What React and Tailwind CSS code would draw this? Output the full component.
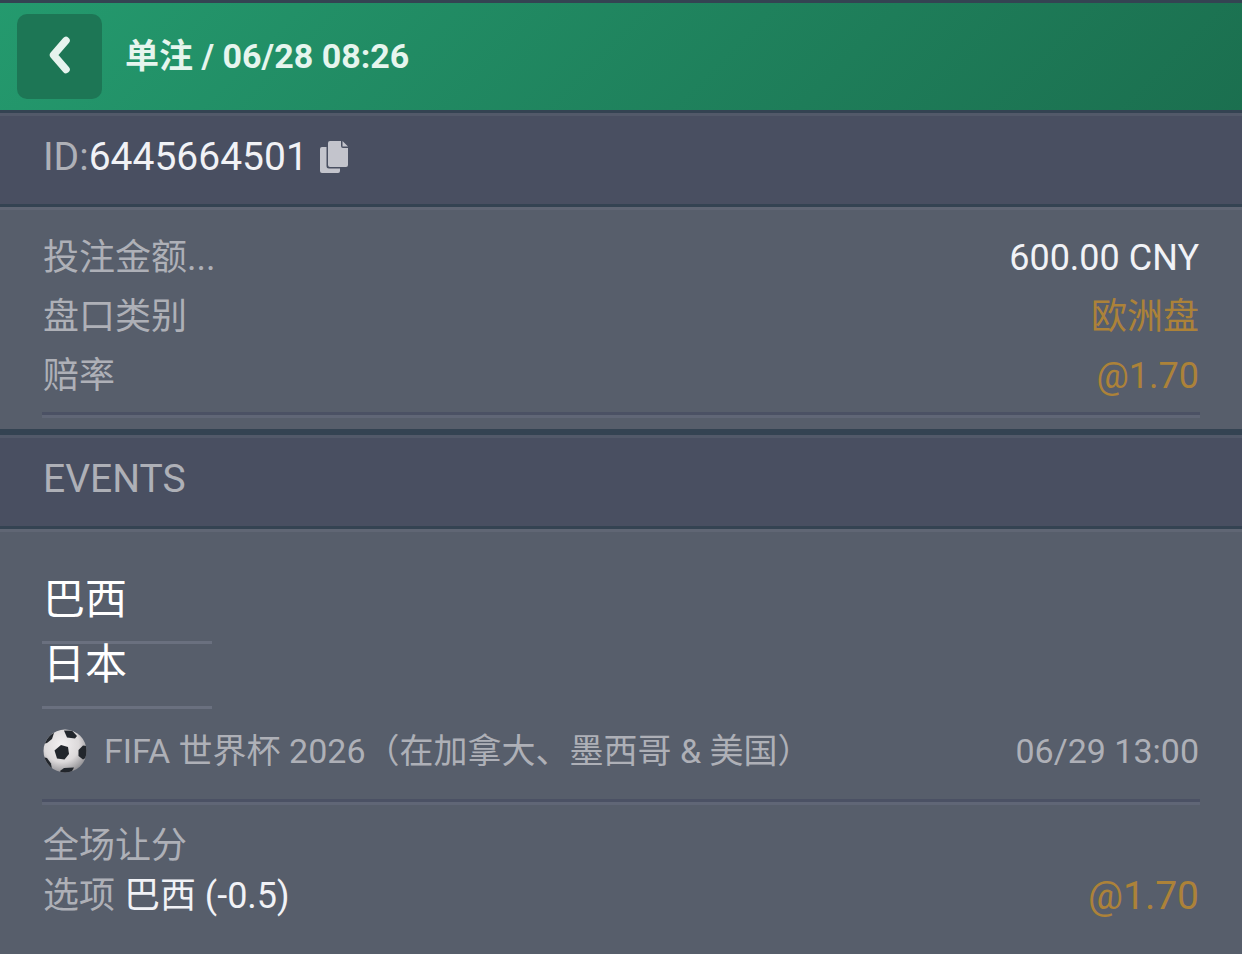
import React, { useState } from 'react';

const bet = {
  type: '单注',
  placedAt: '06/28 08:26',
  id: '6445664501',
  details: [
    { label: '投注金额...', value: '600.00 CNY', highlight: false },
    { label: '盘口类别', value: '欧洲盘', highlight: true },
    { label: '赔率', value: '@1.70', highlight: true },
  ],
  teams: ['巴西', '日本'],
  league: 'FIFA 世界杯 2026（在加拿大、墨西哥 & 美国）',
  startsAt: '06/29 13:00',
  market: '全场让分',
  selection: '巴西 (-0.5)',
  odds: '@1.70',
};

const ChevronIcon = () => (
  <svg viewBox="0 0 24 38" className="w-[24px] h-[38px]" fill="none" aria-hidden="true">
    <path d="M18 4.500 L5.500 19 L18 33.500" stroke="#e6f3ee" strokeWidth="7.5" strokeLinecap="round" strokeLinejoin="round" />
  </svg>
);

const CopyIcon = () => (
  <svg viewBox="0 0 28 32" className="w-7 h-8" fill="#c3c4cc" aria-hidden="true">
    <path d="M2 6 H6.500 V25 Q6.500 27.500 9 27.500 H20 V30 Q20 32 18 32 H2 Q0 32 0 30 V8 Q0 6 2 6 Z" />
    <path d="M10 0 H21 V5 Q21 7 23 7 H28 V24 Q28 26 26 26 H10 Q8 26 8 24 V2 Q8 0 10 0 Z" />
    <path d="M22.500 0 L28 5.500 H22.500 Z" />
  </svg>
);

const BallIcon = () => (
  <svg viewBox="0 0 44 44" className="w-11 h-11 shrink-0" aria-hidden="true">
    <defs>
      <radialGradient id="ballShade" cx="0.42" cy="0.35" r="0.68">
        <stop offset="0" stopColor="#f2f0f1" />
        <stop offset="0.6" stopColor="#dcd9da" />
        <stop offset="1" stopColor="#8f8e92" />
      </radialGradient>
      <clipPath id="ballClip">
        <circle cx="22" cy="22" r="21.500" />
      </clipPath>
    </defs>
    <circle cx="22" cy="22" r="21.500" fill="url(#ballShade)" />
    <g clipPath="url(#ballClip)" fill="#22262c">
      <path d="M11.500 21.500 L18 16 L25 18 L26 25 L21.500 30.500 L14 29.500 Z" />
      <path d="M21 1.500 L29 1.500 L34 7 L32 9.500 L24 8.500 Z" />
      <path d="M40 16.500 L35.500 21 L35.500 27 L40 30.500 L44 28 L44 17 Z" />
      <path d="M17 42 L21 39 L31 38.500 L28 44 L18 44 Z" />
      <path d="M0 15 L4 14 L9 10 L11 4 L3 6 Z" />
      <path d="M0 28 L4 29 L8 34.500 L9 40 L3 38 Z" />
    </g>
  </svg>
);

const SectionBar = ({ children }) => (
  <div className="flex items-center h-[94px] px-[43px] pb-2 text-[39px] bg-[#494f61] border-t-[3px] border-t-[#525969] shadow-[inset_0_-3px_0_#344352]">
    {children}
  </div>
);

const Divider = () => <div className="h-[6px] bg-[#606676] border-t-[3px] border-[#4b5164]" />;

const App = () => {
  const [copied, setCopied] = useState(false);

  const handleCopy = async () => {
    try {
      await navigator.clipboard.writeText(bet.id);
      setCopied(true);
    } catch (err) {
      console.error('Copy failed', err);
    }
  };

  return (
    <div className="min-h-screen bg-[#575e6b] text-[#aeb0b7] font-[Roboto,'Noto_Sans_CJK_SC',sans-serif]">
      {/* --- HEADER --- */}
      <header className="flex items-center gap-[23px] px-[17px] py-[11px] border-y-[3px] border-[#344352] bg-linear-135 from-[#249a6e] to-[#1b6f4f] bg-origin-border">
        <button type="button" aria-label="返回" className="flex items-center justify-center size-[85px] pb-1 rounded-[10px] bg-[#1d7655]">
          <ChevronIcon />
        </button>
        <h1 className="pb-0.5 text-[34px] leading-[50px] font-bold text-[#e6f5ee]">
          {bet.type} / {bet.placedAt}
        </h1>
      </header>

      {/* --- BET ID --- */}
      <SectionBar>
        <span>ID:</span>
        <span className="text-[#f1f2f6]">{bet.id}</span>
        <button type="button" onClick={handleCopy} aria-label={copied ? '已复制' : '复制'} className="ml-3 pb-0.5">
          <CopyIcon />
        </button>
      </SectionBar>

      {/* --- BET DETAILS --- */}
      <section className="px-[42px] pt-[19px] pb-[11px] border-t-[3px] border-t-[#606674] border-b-[6px] border-b-[#344352]">
        <dl className="px-px pb-1.5">
          {bet.details.map((row) => (
            <div key={row.label} className="flex justify-between text-[36px] leading-[59px]">
              <dt>{row.label}</dt>
              <dd className={row.highlight ? 'text-[#ac8239]' : 'text-[#f1f2f6]'}>{row.value}</dd>
            </div>
          ))}
        </dl>
        <Divider />
      </section>

      {/* --- EVENTS --- */}
      <SectionBar>
        <h2>EVENTS</h2>
      </SectionBar>

      <section className="px-[42px] pt-[47px] pb-8 border-t-[3px] border-t-[#606674]">
        <ul className="w-[170px] text-[42px] leading-[41px] text-white">
          {bet.teams.map((team) => (
            <li key={team} className="px-px pb-[21px] border-b-[3px] border-[#6a707f]">{team}</li>
          ))}
        </ul>

        <div className="flex items-center px-px pt-[17px] pb-[23px] text-[34px] leading-[50px]">
          <BallIcon />
          <span className="ml-[17px]">{bet.league}</span>
          <time className="ml-auto">{bet.startsAt}</time>
        </div>
        <Divider />

        <div className="px-px pt-4 text-[36px] leading-[50px]">
          <p>{bet.market}</p>
          <div className="flex justify-between">
            <p>
              选项 <span className="text-[#f1f2f6]">{bet.selection}</span>
            </p>
            <p className="text-[39px] text-[#ac8239]">{bet.odds}</p>
          </div>
        </div>
      </section>
    </div>
  );
};

export default App;
